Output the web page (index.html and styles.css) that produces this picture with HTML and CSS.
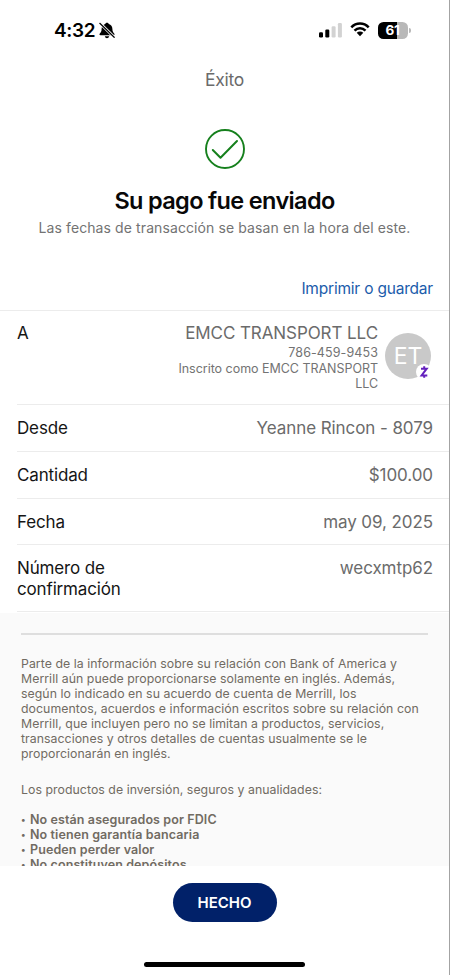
FILE: index.html
```html
<!DOCTYPE html>
<html lang="es">
<head>
<meta charset="utf-8">
<meta name="viewport" content="width=device-width, initial-scale=1">
<title>Éxito</title>
<link rel="stylesheet" href="styles.css">
</head>
<body>
<div class="screen">
  <header class="status">
    <div class="status-left">
      <span class="time">4:32</span>
      <svg class="bell" viewBox="0 0 16 17" width="16" height="17">
        <path d="M8 .7C6.900 .7 6.400 1.300 6.200 2C4 2.700 2.600 4.600 2.600 7C2.600 9.300 2 10.200 1 11.200C.1 12.200 .4 13.200 1.500 13.200H14.500C15.600 13.200 15.900 12.200 15 11.200C14 10.200 13.400 9.300 13.400 7C13.400 4.600 12 2.700 9.800 2C9.600 1.300 9.100 .7 8 .7ZM5.800 14.200H10.200C9.900 15.500 9.100 16.200 8 16.200S6.100 15.500 5.800 14.200Z" fill="#000"/>
        <path d="M1 1.300L15.500 15.500" stroke="#fff" stroke-width="2.800"/>
        <path d="M.8 1.300L15.200 15.300" stroke="#000" stroke-width="1.200" stroke-linecap="round"/>
      </svg>
    </div>
    <div class="status-right">
      <svg viewBox="0 0 23 15" width="23" height="15">
        <rect x="0" y="9.200" width="4" height="5.300" rx="1.200"/>
        <rect x="6.300" y="6.500" width="4" height="8" rx="1.200"/>
        <rect x="12.600" y="3.300" width="4" height="11.200" rx="1.200" fill="#d2d2d2"/>
        <rect x="18.900" y="0" width="4" height="14.500" rx="1.200" fill="#d2d2d2"/>
      </svg>
      <svg class="wifi" viewBox="0 0 20 15" width="20" height="15">
        <path d="M1.300 5.400C6.200 .3 13.800 .3 18.700 5.400M4.500 8.700C7.700 5.500 12.300 5.500 15.500 8.700" fill="none" stroke="#000" stroke-width="2.500"/>
        <path d="M6.700 10.800C8.600 9.100 11.400 9.100 13.300 10.800L10 14.300Z"/>
      </svg>
      <div class="battery"><span class="level">61</span><i class="tip"></i></div>
    </div>
  </header>
  <h1 class="title"><span>Éxito</span></h1>
  <section class="hero">
    <svg class="check" viewBox="0 0 40 40" width="40" height="40" fill="none" stroke="#16801d">
      <circle cx="20" cy="20" r="19" stroke-width="1.900"/>
      <path d="M7.800 21L15.500 28.700L32 12" stroke-width="2" stroke-linecap="round" stroke-linejoin="round"/>
    </svg>
    <h2><span>Su pago fue enviado</span></h2>
    <p><span>Las fechas de transacción se basan en la hora del este.</span></p>
  </section>
  <div class="actions"><a class="print">Imprimir o guardar</a></div>
  <main class="details">
    <div class="row payee">
      <span class="label">A</span>
      <div class="payee-text">
        <span class="name">EMCC TRANSPORT LLC</span>
        <span class="phone">786-459-9453</span>
        <span class="enrolled">Inscrito como EMCC TRANSPORT<br>LLC</span>
      </div>
      <div class="avatar"><span>ET</span>
        <svg class="zelle" viewBox="0 0 16 16" width="16" height="16">
          <circle cx="8" cy="8" r="8" fill="#fff"/>
          <path d="M5 4.700H10.700L5.600 11.500H11.300M8.200 2.300V4.700M8.200 11.500V13.700" fill="none" stroke="#6420bd" stroke-width="2"/>
        </svg>
      </div>
    </div>
    <div class="row from"><span class="label">Desde</span><span class="value">Yeanne Rincon - 8079</span></div>
    <div class="row amount"><span class="label">Cantidad</span><span class="value">$100.00</span></div>
    <div class="row date"><span class="label">Fecha</span><span class="value">may 09, 2025</span></div>
    <div class="row confirm"><span class="label">Número de<br>confirmación</span><span class="value">wecxmtp62</span></div>
  </main>
  <section class="legal">
    <p>Parte de la información sobre su relación con Bank of America y<br>Merrill aún puede proporcionarse solamente en inglés. Además,<br>según lo indicado en su acuerdo de cuenta de Merrill, los<br>documentos, acuerdos e información escritos sobre su relación con<br>Merrill, que incluyen pero no se limitan a productos, servicios,<br>transacciones y otros detalles de cuentas usualmente se le<br>proporcionarán en inglés.</p>
    <p class="products">Los productos de inversión, seguros y anualidades:</p>
    <ul>
      <li>No están asegurados por FDIC</li>
      <li>No tienen garantía bancaria</li>
      <li>Pueden perder valor</li>
      <li>No constituyen depósitos</li>
    </ul>
  </section>
  <footer class="footer">
    <button class="done">HECHO</button>
    <div class="home"></div>
  </footer>
</div>
</body>
</html>
```
FILE: styles.css
```css
* { box-sizing: border-box; margin: 0; padding: 0; }
body { background: #fff; font-family: Inter, "Liberation Sans", sans-serif; color: #151515; }
.screen { width: 450px; height: 975px; display: flex; flex-direction: column; overflow: hidden; border-right: 1px solid #a3a3a3; background: #fff; }
svg { display: block; }
.status { height: 62px; flex: none; display: flex; justify-content: space-between; padding: 20px 38px 0 54px; }
.status-left { display: flex; }
.time { font-size: 19px; line-height: 22px; font-weight: 600; color: #000; width: 45px; letter-spacing: -.35px; }
.bell { margin-top: 2px; }
.status-right { display: flex; padding-top: 2px; }
.status-right > svg { margin-top: 1px; }
.status-right .wifi { margin: 0 8px 0 8px; }
.battery { position: relative; width: 30px; height: 17px; border-radius: 5.500px; background: linear-gradient(90deg, #000 62%, #b8b8b8 62%); color: #fff; font-size: 13.500px; line-height: 17px; font-weight: 700; text-align: center; margin-right: 3px; letter-spacing: -.3px; padding-right: 1px; }
.tip { position: absolute; right: -3px; top: 6px; width: 2px; height: 5px; border-radius: 0 2px 2px 0; background: #b8b8b8; }
.title { height: 36px; flex: none; text-align: center; font-size: 17.500px; line-height: 35px; font-weight: 400; color: #6b6b6b; letter-spacing: -.25px; }
.hero { height: 174px; flex: none; display: flex; flex-direction: column; align-items: center; padding-top: 31px; }
.hero h2 { margin-top: 17px; font-size: 23.500px; line-height: 30px; font-weight: 600; letter-spacing: -.65px; color: #080808; white-space: nowrap; }
.hero p { margin-top: 3px; font-size: 14px; line-height: 18px; letter-spacing: .1px; color: #737373; white-space: nowrap; }
.actions { height: 38px; flex: none; text-align: right; padding: 6px 16px 0 0; }
.print { font-size: 15.500px; line-height: 22px; letter-spacing: -.2px; color: #1b5cab; }
.details { flex: none; border-top: 1px solid #ececec; }
.row { display: flex; justify-content: space-between; margin-left: 17px; padding: 13px 16px 0 0; border-bottom: 1px solid #ececec; font-size: 17px; line-height: 21px; letter-spacing: -.15px; white-space: nowrap; }
.value, .name { color: #6b6b6b; letter-spacing: -.08px; }
.payee { height: 94px; padding-top: 12px; justify-content: flex-start; padding-right: 18px; }
.payee-text { display: flex; flex-direction: column; align-items: flex-end; margin-left: auto; color: #737373; }
.phone { font-size: 12.500px; line-height: 17px; letter-spacing: .1px; }
.enrolled { font-size: 12.500px; line-height: 15px; text-align: right; letter-spacing: -.03px; }
.avatar { position: relative; width: 46px; height: 46px; margin: 10px 0 0 7px; border-radius: 50%; background: #c9c9c9; color: #fff; text-align: center; font-size: 23px; line-height: 47px; }
.zelle { position: absolute; right: -1px; bottom: -1px; }
.from { height: 47px; }
.amount, .date { height: 46.500px; }
.confirm { height: 67px; }
.legal { flex: 1; min-height: 0; overflow: hidden; background: #fafafa; padding: 20px 21px 0; margin-top: 1px; color: #716b62; font-size: 12.300px; line-height: 15px; letter-spacing: .05px; white-space: nowrap; }
.legal p:first-child { border-top: 2px solid #dedede; padding-top: 21px; }
.legal .products { margin-top: 21px; }
.legal ul { list-style: none; margin-top: 15px; font-size: 12.500px; letter-spacing: .1px; font-weight: 600; }
.legal li { display: flex; height: 15px; }
.legal li::before { content: "•"; width: 9px; font-size: 9px; }
.footer { height: 109px; flex: none; display: flex; flex-direction: column; align-items: center; padding-top: 17px; background: #fff; }
.done { width: 104px; height: 39px; border: 0; border-radius: 20px; background: #012169; color: #fff; font: 600 15px/39px Inter, sans-serif; }
.home { width: 161px; height: 5px; margin-top: 40px; border-radius: 3px; background: #000; }
```
